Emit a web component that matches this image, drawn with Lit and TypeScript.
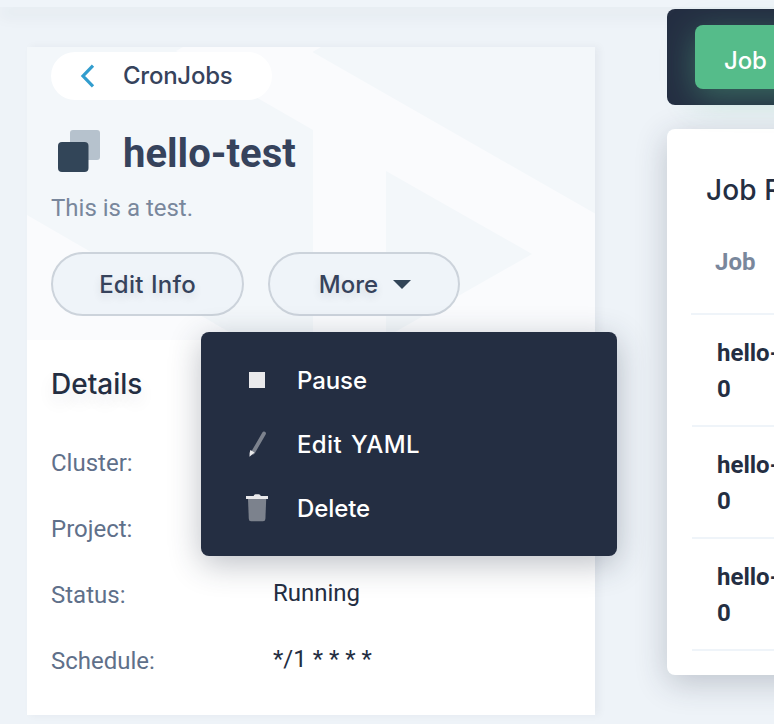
import { LitElement, html, css, svg } from "lit";
import { customElement } from "lit/decorators.js";

const details = [
  { label: "Cluster:", value: "" },
  { label: "Project:", value: "" },
  { label: "Status:", value: "Running" },
  { label: "Schedule:", value: "*/1 * * * *" },
];

const icons = {
  pause: svg`<rect x="8" y="8" width="16" height="16" fill="#e9e9eb"/>`,
  pen: svg`<path d="M23 5.500 12 24.500" stroke="#7c828d" stroke-width="3.800" stroke-linecap="round"/>
    <path d="M9.400 22 13.500 24.400 8.500 28.700Q8.200 25 9.400 22Z" fill="#e9e9eb"/>`,
  trash: svg`<path d="M7 7H25.200L24.400 27Q24.300 29.300 22 29.300H10Q7.900 29.300 7.800 27Z" fill="#7c828d"/>
    <path d="M5 4H12.600Q13 2.300 14.600 2.300H17.600Q19.400 2.300 19.800 4H27V6.900H5Z" fill="#e9e9eb"/>`,
};

const actions = [
  { icon: icons.pause, text: "Pause" },
  { icon: icons.pen, text: "Edit YAML" },
  { icon: icons.trash, text: "Delete" },
];

@customElement("job-records")
class JobRecords extends LitElement {
  static styles = css`
    :host { display: block; }
    .tabs {
      height: 96px; box-sizing: border-box; padding: 16px 28px; display: flex;
      background: #242e42; border-radius: 8px;
    }
    .tab {
      width: 240px; height: 64px; box-sizing: border-box; padding-left: 29px; border-radius: 8px;
      background: #55bc8a; color: #fff; box-shadow: 0 8px 32px rgba(85, 188, 138, .42);
      font: 500 24px/71px Inter, sans-serif; letter-spacing: -.1px; white-space: nowrap;
    }
    .card {
      margin-top: 24px; height: 546px; box-sizing: border-box; padding: 41px 0 0 24px;
      border-radius: 8px; background: #fff; box-shadow: 0 8px 32px rgba(36, 46, 66, .24);
    }
    h2 {
      margin: 0 0 0 15px; font: 500 28px/40px Inter, sans-serif; color: #242e42;
      letter-spacing: .1px; white-space: nowrap;
    }
    .head {
      margin-top: 23px; height: 80px; padding-left: 24px; border-bottom: 2px solid #eff4f9;
      font: 700 24px/58px Roboto, sans-serif; color: #79879c;
    }
    .row {
      height: 110px; margin-left: 1px; border-bottom: 2px solid #eff4f9;
      display: flex; align-items: center; padding-left: 25px;
      font: 700 24px/36px Roboto, sans-serif; color: #242e42; white-space: nowrap;
    }
    .row span { padding-top: 2px; }
  `;
  render() {
    return html`
      <div class="tabs"><div class="tab">Job Records</div></div>
      <div class="card">
        <h2>Job Records</h2>
        <div class="head">Job</div>
        ${[0, 1, 2].map(() => html`<div class="row"><span>hello-test-<br>0</span></div>`)}
      </div>`;
  }
}

@customElement("app-root")
class AppRoot extends LitElement {
  static styles = css`
    :host {
      display: flex; flex-direction: column; position: relative; width: 774px; height: 724px;
      overflow: hidden; background: #eef3f8; font-family: Roboto, sans-serif;
    }
    .top { height: 7px; flex: none; background: #eff4f9; box-shadow: 0 8px 16px rgba(36, 46, 66, .08); }
    .page { display: flex; align-items: flex-start; padding-left: 27px; }
    .panel {
      flex: none; width: 568px; height: 668px; margin-top: 40px; background: #fff;
      box-shadow: 4px 0 8px rgba(36, 46, 66, .05);
    }
    job-records { flex: none; width: 600px; margin: 2px 0 0 72px; }
    .hero { display: grid; height: 293px; }
    .hero > * { grid-area: 1 / 1; }
    .content { padding: 5px 24px 0; position: relative; }
    .back {
      width: 221px; height: 48px; display: flex; align-items: center; border-radius: 24px;
      background: #fff; font: 500 24px/48px Inter, sans-serif; color: #36435c; letter-spacing: -.25px;
    }
    .back svg { margin: 0 27px 0 29px; }
    .title { display: flex; align-items: center; height: 44px; margin-top: 29px; }
    .title svg { margin-right: 22px; }
    h1 { margin: 5px 0 0; font: 700 40px/44px Roboto, sans-serif; color: #36435c; }
    .desc { margin-top: 17px; font-size: 24px; line-height: 36px; color: #79879c; }
    .buttons { display: flex; gap: 24px; margin-top: 26px; }
    .btn {
      width: 193px; height: 64px; box-sizing: border-box; border: 2px solid #ccd3db;
      border-radius: 32px; background: #eff4f9; color: #36435c;
      display: flex; align-items: center; justify-content: center; gap: 15px;
      font: 500 24px/60px Inter, sans-serif; letter-spacing: .2px; word-spacing: 1px; padding-top: 1px;
      text-shadow: 0 4px 8px rgba(36, 46, 66, .12);
    }
    .btn + .btn { width: 192px; padding-left: 2px; letter-spacing: 0; }
    h2 {
      margin: 24px 24px 0; font: 550 28px/40px Inter, sans-serif; color: #242e42;
      text-shadow: 0 8px 16px rgba(36, 46, 66, .1);
    }
    dl {
      margin: 26px 24px 0; display: grid; grid-template-columns: 222px 1fr;
      grid-auto-rows: 66px; font-size: 24px; line-height: 66px;
    }
    dt { color: #5f708a; }
    dd { margin: -2px 0 0; color: #242e42; }
    .menu {
      position: absolute; left: 201px; top: 332px; width: 416px; height: 224px;
      box-sizing: border-box; padding: 16px 40px; border-radius: 8px; background: #242e42;
      box-shadow: 0 8px 32px rgba(36, 46, 66, .3);
    }
    .item {
      height: 64px; display: flex; align-items: center; gap: 24px;
      font: 500 24px/62px Inter, sans-serif; color: #fff; letter-spacing: -.1px;
    }
    .item:nth-child(2) { letter-spacing: .4px; word-spacing: 2px; }
    .item span { padding-top: 2px; }
  `;
  render() {
    return html`
      <div class="top"></div>
      <div class="page">
        <section class="panel">
          <div class="hero">
            <svg width="568" height="293" viewBox="27 47 568 293">
              <path d="M27 47H595V340H27Z" fill="#f3f7fa"/>
              <path d="M183 47H321L312.500 52 595 213.500V340H381L532 254 386 171V340H313V130L176 51ZM27 215 243 340H27Z" fill="#fafbfd"/>
            </svg>
            <div class="content">
              <div class="back">
                <svg width="16" height="24" viewBox="0 0 16 24"><path d="M13 1.700 3 12 13 22.300" fill="none" stroke="#329dce" stroke-width="3.200"/></svg>
                <span>CronJobs</span>
              </div>
              <div class="title">
                <svg width="50" height="44" viewBox="0 0 50 44">
                  <rect x="19" y="1" width="30" height="30" rx="3" fill="#b6c2cd"/>
                  <rect x="7" y="13" width="30.500" height="30" rx="4" fill="#324558"/>
                </svg>
                <h1>hello-test</h1>
              </div>
              <div class="desc">This is a test.</div>
              <div class="buttons">
                <div class="btn">Edit Info</div>
                <div class="btn">More<svg width="18" height="10" viewBox="0 0 18 10"><path d="M0 0H18L9 9Z" fill="#324558"/></svg></div>
              </div>
            </div>
          </div>
          <h2>Details</h2>
          <dl>${details.map((d) => html`<dt>${d.label}</dt><dd>${d.value}</dd>`)}</dl>
        </section>
        <job-records></job-records>
      </div>
      <div class="menu">
        ${actions.map((a) => html`<div class="item">
          <svg width="32" height="32" viewBox="0 0 32 32" fill="none">${a.icon}</svg><span>${a.text}</span></div>`)}
      </div>`;
  }
}
